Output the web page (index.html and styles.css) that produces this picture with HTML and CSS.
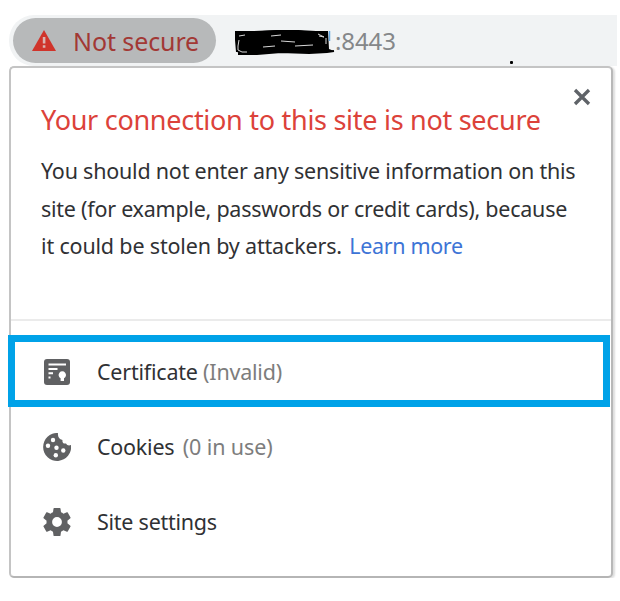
FILE: index.html
```
<!DOCTYPE html>
<html lang="en">
<head>
<meta charset="utf-8">
<title>Connection information</title>
<link rel="stylesheet" href="styles.css">
</head>
<body>
<div class="window">
  <header class="omnibox">
    <div class="security">
      <svg class="warning" viewBox="0 0 24 21"><path fill="#d0342b" d="M12 0 24 21H0z"/><path fill="#d9b5b2" d="M10.8 7h2.600v6.500h-2.600zM10.800 15.300h2.600v2.500h-2.600z"/></svg>
      <span class="t-status">Not secure</span>
    </div>
    <svg class="scribble" viewBox="0 0 102 28">
      <path d="M2 4 14 4 29 3 46 2 62 2 80 4 95 3 96 21 101 23 94 24 74 25 46 24 22 26 6 26 3 22 3 11 2 5z"/>
      <path class="edge" d="M3 5 3 12 4 24M2 4 21 4 44 3 65 3 83 4 94 4M5 26 24 26 48 24 76 25 94 24 101 23"/>
      <path class="scratch" d="M6 12 5 18 5 22 9 24 14 24M6 8l6-1M38 8l10-1M48 13l14 1M30 19l12-1M62 18l18-1M85 6l6 3-5-1M93 10v6"/>
      <path class="blue" d="M96.500 3v10"/>
    </svg>
    <span class="port t-port">:8443</span>
    <span class="speck"></span>
  </header>
  <main class="bubble">
    <section class="intro">
      <svg class="close" viewBox="0 0 18 18"><path d="M2 2l14 14M16 2 2 16"/></svg>
      <h1><span class="t-title">Your connection to this site is not secure</span></h1>
      <p>
        <span class="line t-one">You should not enter any sensitive information on this</span>
        <span class="line t-two">site (for example, passwords or credit cards), because</span>
        <span class="line t-three">it could be stolen by attackers. <a>Learn more</a></span>
      </p>
    </section>
    <nav class="rows">
      <div class="row selected">
        <svg class="icon" viewBox="0 0 28 28"><rect x="1" y="1" width="26" height="26" rx="3"/><path class="hole" d="M5.500 5.500h17.500v2H5.500zM5.500 10h9v2h-9zM5.500 14.300h4.500v2H5.500zM5.500 18.600h2v2h-2zM17.600 20.300a3.700 3.700 0 1 1 3.400 0V23h-3.400z"/></svg>
        <span class="label t-cert">Certificate <em>(Invalid)</em></span>
      </div>
      <div class="row">
        <svg class="icon" viewBox="0 0 28 28"><path d="M15 0A14 14 0 1 0 28 12c-2 1-4 .5-5-1.500-2.500.5-4-1-3.500-3.500C16 6.500 14.500 3.500 15 0z"/><g class="hole"><circle cx="10" cy="7" r="2.200"/><circle cx="5" cy="12.800" r="2.200"/><circle cx="13.500" cy="14.800" r="2.200"/><circle cx="20.300" cy="17.500" r="2.200"/><circle cx="12.800" cy="22.300" r="2.200"/></g></svg>
        <span class="label t-cookie">Cookies <em>(0 in use)</em></span>
      </div>
      <div class="row">
        <svg class="icon gear" viewBox="2 2 20 20"><path d="M19.430 12.980c.04-.32.07-.64.07-.98s-.03-.66-.07-.98l2.110-1.650c.19-.15.24-.42.12-.64l-2-3.460c-.12-.22-.39-.3-.61-.22l-2.490 1c-.52-.4-1.080-.73-1.690-.98l-.38-2.650C14.460 2.180 14.250 2 14 2h-4c-.25 0-.46.18-.49.42l-.38 2.650c-.61.25-1.170.59-1.690.98l-2.490-1c-.23-.09-.49 0-.61.22l-2 3.460c-.13.22-.07.49.12.64l2.110 1.650c-.04.32-.07.65-.07.98s.03.66.07.98l-2.110 1.650c-.19.15-.24.42-.12.64l2 3.460c.12.22.39.3.61.22l2.490-1c.52.4 1.080.73 1.690.98l.38 2.650c.03.24.24.42.49.42h4c.25 0 .46-.18.49-.42l.38-2.650c.61-.25 1.170-.59 1.690-.98l2.490 1c.23.09.49 0 .61-.22l2-3.460c.12-.22.07-.49-.12-.64l-2.110-1.650zM12 15.500A3.500 3.500 0 1 1 12 8.500a3.500 3.500 0 0 1 0 7z"/></svg>
        <span class="label t-site">Site settings</span>
      </div>
    </nav>
  </main>
</div>
</body>
</html>
```
FILE: styles.css
```
*, *::after { box-sizing: border-box; }
body { margin: 0; background: #fff; color: #303134; font-family: "Noto Sans", "Open Sans", sans-serif; font-size: 21.5px; }
.window { width: 617px; padding: 15px 0 0 9px; }
.omnibox { position: relative; display: flex; align-items: center; height: 51px; padding-left: 4px; background: #f1f3f4; border-radius: 25px 0 0 25px; }
.security { display: flex; align-items: center; width: 203px; height: 45px; padding-left: 19px; border-radius: 23px; background: #b7b9ba; color: #a23835; }
.warning { width: 24px; height: 21px; margin-right: 17px; }
.security span { white-space: nowrap; font-size: 25px; letter-spacing: -0.1px; }
.scribble { width: 102px; height: 28px; margin-left: 17px; position: relative; top: 1px; }
.edge { fill: none; stroke: #000; stroke-width: 2; }
.scratch { fill: none; stroke: #d8d8d8; stroke-width: 1; }
.blue { stroke: #63a6df; stroke-width: 1.5; }
.port { color: #858789; font-size: 24px; letter-spacing: -0.1px; }
.speck { position: absolute; left: 501px; top: 46px; width: 3px; height: 3px; border-radius: 1px; background: #000; }
.bubble { position: relative; width: 604px; height: 512px; border: 2px solid #c4c4c4; border-right-color: #b8b8b8; border-bottom-color: #b5b5b5; border-radius: 5px; background: #fff; box-shadow: 2px 1px 2px #dedede; }
.intro { height: 253px; padding: 30px 0 0 30px; border-bottom: 2px solid #ebebeb; }
.close { position: absolute; right: 20px; top: 20px; width: 18px; height: 18px; fill: none; stroke: #5f6368; stroke-width: 3.3; }
h1 { margin: 0; height: 43px; line-height: 43px; font-size: 27px; font-weight: 400; color: #dc423a; white-space: nowrap; }
p { margin: 11px 0 0; }
.line { display: block; width: max-content; height: 37.5px; line-height: 37.5px; white-space: nowrap; }
.t-title { letter-spacing: -0.28px; }
.t-one { letter-spacing: -0.22px; }
.t-two { letter-spacing: -0.25px; }
.t-three { letter-spacing: -0.17px; }
.t-three a { margin-left: 2px; letter-spacing: -0.35px; }
.t-cert { letter-spacing: -0.22px; }
.t-cookie { letter-spacing: -0.25px; }
.t-cookie em { margin-left: 3px; letter-spacing: -0.1px; }
.t-site { letter-spacing: -0.25px; }
a { color: #3d74d6; }
.rows { padding-top: 13px; }
.row { display: flex; align-items: center; height: 75px; padding-left: 32px; }
.selected { position: relative; }
.selected::after { content: ""; position: absolute; left: -3px; right: 1px; top: 1px; height: 72px; border: 7px solid #00a2e8; }
.icon { width: 28px; height: 28px; margin-right: 26px; fill: #606163; }
.hole { fill: #fff; }
.label { white-space: nowrap; }
em { color: #7d7d7d; font-style: normal; }
```
